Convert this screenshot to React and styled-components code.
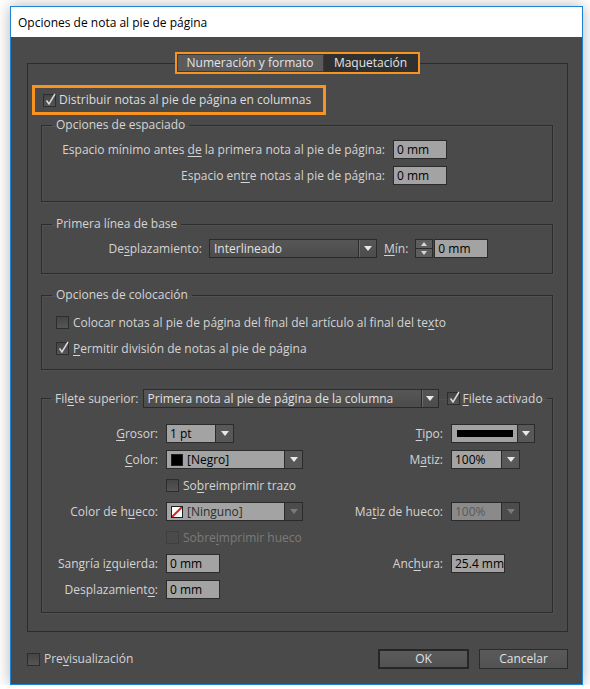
import React from "react";
import styled, { createGlobalStyle } from "styled-components";

const FONT = `"Open Sans", "Noto Sans", "Liberation Sans", sans-serif`;

const GlobalStyle = createGlobalStyle`
  html, body { margin: 0; padding: 0; background: #ffffff; }
  body { font-family: ${FONT}; font-size: 12px; }
  * { box-sizing: border-box; }
`;

const Page = styled.div`
  padding: 6px 0 0 10px;
`;

const Window = styled.div`
  width: 573px;
  height: 679px;
  border: 1px solid #1b84d6;
  background: #4a4a4a;
  box-shadow: 0 0 14px rgba(0, 0, 0, 0.3);
  display: flex;
  flex-direction: column;
`;

const TitleBar = styled.div`
  height: 30px;
  flex: none;
  background: #ffffff;
  color: #000000;
  display: flex;
  align-items: center;
  padding-left: 7px;
  font-size: 12px;
`;

const Body = styled.div`
  flex: 1;
  display: flex;
  flex-direction: column;
  padding: 15px 14px 15px 16px;
  color: #d4d4d4;
  line-height: 16px;
`;

const Panel = styled.fieldset`
  margin: 0;
  min-width: 0;
  border: 1px solid #2c2c2c;
  padding: 11px 14px 18px 13px;
`;

const TabStrip = styled.legend`
  margin: 0 auto;
  padding: 0;
  display: flex;
  border: 2px solid #f7931e;
`;

const Tab = styled.div`
  width: ${(p) => p.$w}px;
  height: 18px;
  display: flex;
  align-items: center;
  justify-content: center;
  color: #e4e4e4;
  background: ${(p) => (p.$light ? "#5b5b5b" : "#303030")};
  border: 1px solid ${(p) => (p.$light ? "#3a3a3a" : "#303030")};
`;

const Highlight = styled.div`
  width: 294px;
  height: 30px;
  margin-left: -9px;
  border: 3px solid #f7931e;
  display: flex;
  align-items: center;
  gap: 3px;
  padding-left: 8px;
  color: #dedede;
`;

const Group = styled.fieldset`
  margin: ${(p) => p.$mt}px 0 0 0;
  min-width: 0;
  border: 1px solid #2c2c2c;
  box-shadow: 1px 1px 0 #525252, inset 1px 1px 0 #525252;
  padding: ${(p) => p.$pad};
`;

const GroupTitle = styled.legend`
  margin-left: -4px;
  padding: 0 4px;
  color: #d4d4d4;
  line-height: 16px;
`;

const GroupHeader = styled.legend`
  margin-left: -5px;
  padding: 0 4px;
  display: flex;
  align-items: center;
  color: #d4d4d4;
`;

const Grid = styled.div`
  display: grid;
  grid-template-columns: ${(p) => p.$cols};
  column-gap: 8px;
  row-gap: 7px;
  align-items: center;
`;

const Label = styled.span`
  text-align: right;
  white-space: nowrap;
  color: ${(p) => (p.$disabled ? "#7a7a7a" : "#d4d4d4")};
`;

const U = styled.span`
  text-decoration: underline;
  text-underline-offset: 2px;
`;

const Row = styled.div`
  display: flex;
  align-items: center;
  gap: ${(p) => p.$gap ?? 8}px;
`;

const Stack = styled.div`
  display: flex;
  flex-direction: column;
  gap: 7px;
`;

const FixedLabel = styled(Label)`
  width: ${(p) => p.$w}px;
  flex: none;
`;

const TextField = styled.div`
  width: ${(p) => p.$w || 54}px;
  height: 19px;
  background: #a3a3a3;
  border: 1px solid #2b2b2b;
  color: #000000;
  padding-left: 3px;
  display: flex;
  align-items: center;
  white-space: nowrap;
`;

const DarkSelect = styled.div`
  width: ${(p) => p.$w}px;
  height: 19px;
  flex: none;
  display: flex;
  border: 1px solid #2b2b2b;
  background: linear-gradient(#565656, #4c4c4c);
  color: #e2e2e2;
`;

const SelectText = styled.div`
  flex: 1;
  display: flex;
  align-items: center;
  gap: 4px;
  padding-left: ${(p) => p.$pl ?? 4}px;
  white-space: nowrap;
  overflow: hidden;
  color: ${(p) => p.$color || "inherit"};
`;

const ArrowBox = styled.div`
  width: ${(p) => p.$w || 18}px;
  flex: none;
  display: flex;
  align-items: center;
  justify-content: center;
  background: ${(p) => p.$bg || "transparent"};
  border-left: 1px solid #2b2b2b;
  box-shadow: ${(p) => (p.$etched ? "inset 1px 0 0 #6a6a6a" : "none")};
`;

const Triangle = styled.span`
  width: 0;
  height: 0;
  border-left: 4px solid transparent;
  border-right: 4px solid transparent;
  border-top: 5px solid ${(p) => p.$c || "#e8e8e8"};
`;

const LightCombo = styled.div`
  width: ${(p) => p.$w}px;
  height: 19px;
  flex: none;
  display: flex;
  border: 1px solid #2b2b2b;
  background: ${(p) => (p.$dim ? "#8a8a8a" : "#a3a3a3")};
  color: #000000;
`;

const Swatch = styled.span`
  width: 12px;
  height: 12px;
  flex: none;
  background: ${(p) => p.$c};
  border: 1px solid #1e1e1e;
  display: flex;
`;

const LineSample = styled.span`
  flex: 1;
  height: 7px;
  margin: 0 4px 0 1px;
  background: #000000;
`;

const Spinner = styled.div`
  width: 18px;
  height: 19px;
  display: flex;
  flex-direction: column;
  border: 1px solid #2b2b2b;
  background: #5e5e5e;
`;

const SpinHalf = styled.div`
  flex: 1;
  display: flex;
  align-items: center;
  justify-content: center;
  & + & {
    border-top: 1px solid #2b2b2b;
  }
`;

const SpinTri = styled.span`
  width: 0;
  height: 0;
  border-left: 3px solid transparent;
  border-right: 3px solid transparent;
  ${(p) => (p.$up ? "border-bottom" : "border-top")}: 4px solid #d8d8d8;
`;

const CheckBox = styled.span`
  width: 13px;
  height: 13px;
  flex: none;
  position: relative;
  border: 1px solid ${(p) => (p.$disabled ? "#3f3f3f" : "#2d2d2d")};
  background: ${(p) =>
    p.$disabled ? "#4a4a4a" : "linear-gradient(#454545, #555555)"};
  display: flex;
`;

const CheckMark = styled.svg`
  position: absolute;
  left: 0;
  top: -3px;
  width: 13px;
  height: 14px;
`;

const CheckRow = styled.div`
  display: flex;
  align-items: center;
  gap: ${(p) => p.$gap ?? 4}px;
  height: 19px;
  white-space: nowrap;
  color: ${(p) => (p.$disabled ? "#7a7a7a" : "#d4d4d4")};
`;

const Footer = styled.div`
  margin-top: auto;
  display: flex;
  align-items: center;
  height: 20px;
`;

const Spacer = styled.div`
  flex: 1;
`;

const Button = styled.div`
  width: ${(p) => p.$w}px;
  height: 20px;
  display: flex;
  align-items: center;
  justify-content: center;
  margin-left: ${(p) => p.$ml || 0}px;
  color: #e0e0e0;
  background: linear-gradient(#5a5a5a, #525252);
  border: ${(p) => (p.$default ? "2px solid #262626" : "1px solid #2b2b2b")};
`;

function Tick() {
  return (
    <CheckMark viewBox="0 0 13 14">
      <path d="M2.5 8.5 L5 12 L11 2" stroke="#dcdcdc" strokeWidth="1.5" fill="none" />
    </CheckMark>
  );
}

function Check({ checked, disabled, children, gap }) {
  return (
    <CheckRow $disabled={disabled} $gap={gap}>
      <CheckBox $disabled={disabled}>{checked && <Tick />}</CheckBox>
      <span>{children}</span>
    </CheckRow>
  );
}

function NoneSwatch() {
  return (
    <Swatch $c="#ffffff">
      <svg width="10" height="10" viewBox="0 0 10 10">
        <line x1="0" y1="10" x2="10" y2="0" stroke="#e0201c" strokeWidth="2" />
      </svg>
    </Swatch>
  );
}

export default function App() {
  return (
    <Page>
      <GlobalStyle />
      <Window>
        <TitleBar>Opciones de nota al pie de página</TitleBar>
        <Body>
          <Panel>
            <TabStrip>
              <Tab $w={147} $light>
                Numeración y formato
              </Tab>
              <Tab $w={94}>Maquetación</Tab>
            </TabStrip>

            <Highlight>
              <CheckBox>
                <Tick />
              </CheckBox>
              <span>Distribuir notas al pie de página en columnas</span>
            </Highlight>

            <Group $mt={2} $pad="7px 14px 16px 14px">
              <GroupTitle>Opciones de espaciado</GroupTitle>
              <Grid $cols="329px 54px">
                <Label>
                  Espacio mínimo antes <U>de</U> la primera nota al pie de
                  página:
                </Label>
                <TextField>0 mm</TextField>
                <Label>
                  Espacio en<U>tr</U>e notas al pie de página:
                </Label>
                <TextField>0 mm</TextField>
              </Grid>
            </Group>

            <Group $mt={14} $pad="7px 14px 15px 14px">
              <GroupTitle>Primera línea de base</GroupTitle>
              <Row $gap={7}>
                <FixedLabel $w={146}>
                  De<U>s</U>plazamiento:
                </FixedLabel>
                <DarkSelect $w={168}>
                  <SelectText>Interlineado</SelectText>
                  <ArrowBox $etched>
                    <Triangle />
                  </ArrowBox>
                </DarkSelect>
                <Label>
                  <U>M</U>ín:
                </Label>
                <Row $gap={1}>
                  <Spinner>
                    <SpinHalf>
                      <SpinTri $up />
                    </SpinHalf>
                    <SpinHalf>
                      <SpinTri />
                    </SpinHalf>
                  </Spinner>
                  <TextField>0 mm</TextField>
                </Row>
              </Row>
            </Group>

            <Group $mt={13} $pad="10px 14px 11px 14px">
              <GroupTitle>Opciones de colocación</GroupTitle>
              <Stack>
                <Check>
                  Colocar notas al pie de página del final del artículo al
                  final del te<U>x</U>to
                </Check>
                <Check checked>
                  <U>P</U>ermitir división de notas al pie de página
                </Check>
              </Stack>
            </Group>

            <Group $mt={19} $pad="16px 17px 13px 14px">
              <GroupHeader>
                <Label>
                  Fil<U>e</U>te superior:
                </Label>
                <Row $gap={4}>
                  <span />
                  <DarkSelect $w={296}>
                    <SelectText>Primera nota al pie de página de la columna</SelectText>
                    <ArrowBox $etched $w={17}>
                      <Triangle />
                    </ArrowBox>
                  </DarkSelect>
                  <span />
                  <Check checked gap={3}>
                    <U>F</U>ilete activado
                  </Check>
                </Row>
              </GroupHeader>

              <Grid $cols="102px 144px 1fr 84px">
                <Label>
                  <U>G</U>rosor:
                </Label>
                <LightCombo $w={68}>
                  <SelectText $pl={3}>1 pt</SelectText>
                  <ArrowBox $bg="#585858" $w={18}>
                    <Triangle />
                  </ArrowBox>
                </LightCombo>
                <Label>
                  <U>T</U>ipo:
                </Label>
                <LightCombo $w={84}>
                  <SelectText $pl={4}>
                    <LineSample />
                  </SelectText>
                  <ArrowBox $bg="#585858" $w={17}>
                    <Triangle />
                  </ArrowBox>
                </LightCombo>

                <Label>
                  <U>C</U>olor:
                </Label>
                <LightCombo $w={137}>
                  <SelectText $pl={4}>
                    <Swatch $c="#000000" />
                    [Negro]
                  </SelectText>
                  <ArrowBox $bg="#585858" $w={18}>
                    <Triangle />
                  </ArrowBox>
                </LightCombo>
                <Label>
                  M<U>a</U>tiz:
                </Label>
                <LightCombo $w={69}>
                  <SelectText $pl={3}>100%</SelectText>
                  <ArrowBox $bg="#585858" $w={18}>
                    <Triangle />
                  </ArrowBox>
                </LightCombo>

                <span />
                <Check>
                  So<U>b</U>reimprimir trazo
                </Check>
                <span />
                <span />

                <Label>
                  Color de h<U>u</U>eco:
                </Label>
                <LightCombo $w={137}>
                  <SelectText $pl={4} $color="#2e2e2e">
                    <NoneSwatch />
                    [Ninguno]
                  </SelectText>
                  <ArrowBox $bg="#4c4c4c" $w={18}>
                    <Triangle $c="#7a7a7a" />
                  </ArrowBox>
                </LightCombo>
                <Label>
                  Ma<U>t</U>iz de hueco:
                </Label>
                <LightCombo $w={69} $dim>
                  <SelectText $pl={3} $color="#5a5a5a">
                    100%
                  </SelectText>
                  <ArrowBox $bg="#4c4c4c" $w={18}>
                    <Triangle $c="#7a7a7a" />
                  </ArrowBox>
                </LightCombo>

                <span />
                <Check disabled>
                  Sobre<U>i</U>mprimir hueco
                </Check>
                <span />
                <span />

                <Label>
                  Sangría i<U>z</U>quierda:
                </Label>
                <TextField>0 mm</TextField>
                <Label>
                  Anc<U>h</U>ura:
                </Label>
                <TextField>25.4 mm</TextField>

                <Label>
                  Desplazamient<U>o</U>:
                </Label>
                <TextField>0 mm</TextField>
                <span />
                <span />
              </Grid>
            </Group>
          </Panel>

          <Footer>
            <Check>
              Pre<U>v</U>isualización
            </Check>
            <Spacer />
            <Button $w={91} $default>
              OK
            </Button>
            <Button $w={89} $ml={10}>
              Cancelar
            </Button>
          </Footer>
        </Body>
      </Window>
    </Page>
  );
}
